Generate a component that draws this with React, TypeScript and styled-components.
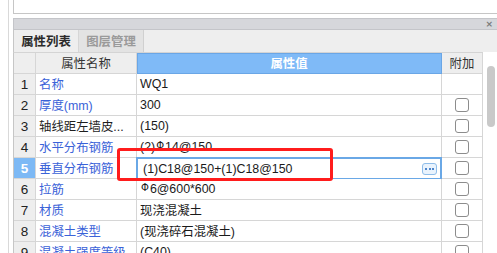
import React from "react";
import styled, { createGlobalStyle } from "styled-components";

const GlobalStyle = createGlobalStyle`
  html, body { margin: 0; padding: 0; background: #ffffff; }
  body {
    font-family: "Liberation Sans", "Noto Sans CJK SC", sans-serif;
    font-size: 12.4px;
    color: #1a1a1a;
    overflow: hidden;
  }
`;

const Page = styled.div`
  position: relative;
  width: 497px;
  height: 253px;
  overflow: hidden;
  padding-left: 8px;
  box-sizing: border-box;
  display: flex;
`;

const Gutter = styled.div`
  flex: 1;
  border-left: 1px solid #d9d9d9;
  padding-left: 4px;
  display: flex;
`;

const Panel = styled.div`
  flex: 1;
  display: flex;
  flex-direction: column;
`;

const TopPane = styled.div`
  height: 13px;
  border-left: 1px solid #c6c6c6;
  border-bottom: 1px solid #c6c6c6;
  background: #ffffff;
  flex: none;
`;

const Spacer = styled.div`
  height: 4px;
  flex: none;
`;

const TitleBar = styled.div`
  height: 10px;
  flex: none;
  background: #d6d7db;
  border: 1px solid #c4c5c9;
  border-right: none;
  display: flex;
  justify-content: flex-end;
  align-items: center;
  padding-right: 4px;
`;

const CloseGlyph = styled.span`
  font-family: "DejaVu Sans", sans-serif;
  font-size: 9px;
  line-height: 10px;
  color: #7a7a7a;
  font-weight: bold;
`;

const TabStrip = styled.div`
  height: 22px;
  flex: none;
  background: #eeeeee;
  border-left: 1px solid #c6c6c6;
  display: flex;
`;

const Tab = styled.div<{ $active?: boolean }>`
  width: 64px;
  box-sizing: border-box;
  display: flex;
  align-items: center;
  justify-content: center;
  font-family: "Noto Sans CJK SC", sans-serif;
  font-size: 12.4px;
  font-weight: ${(p) => (p.$active ? 700 : 700)};
  color: ${(p) => (p.$active ? "#2b2b2b" : "#9a9a9a")};
  background: ${(p) => (p.$active ? "#eeeeee" : "#e3e3e3")};
  border-right: 1px solid ${(p) => (p.$active ? "#d6d6d6" : "#d0d0d0")};
  border-left: ${(p) => (p.$active ? "none" : "none")};
  width: ${(p) => (p.$active ? "65px" : "65px")};
`;

const TableArea = styled.div`
  flex: 1;
  display: flex;
  min-height: 0;
`;

const Grid = styled.div`
  width: 470px;
  flex: none;
  border-left: 1px solid #c6c6c6;
  border-top: 1px solid #d4d4d4;
  box-sizing: border-box;
  display: flex;
  flex-direction: column;
`;

const Row = styled.div`
  display: flex;
  height: 21px;
  flex: none;
`;

const Cell = styled.div<{ $w: number; $bg?: string; $align?: string }>`
  position: relative;
  width: ${(p) => p.$w}px;
  flex: none;
  box-sizing: border-box;
  height: 21px;
  border-right: 1px solid #d6d6d6;
  border-bottom: 1px solid #d6d6d6;
  background: ${(p) => p.$bg || "#ffffff"};
  display: flex;
  align-items: center;
  justify-content: ${(p) => p.$align || "flex-start"};
  white-space: nowrap;
  overflow: visible;
`;

const HeadText = styled.span<{ $light?: boolean }>`
  font-family: "Noto Sans CJK SC", sans-serif;
  font-size: 12.4px;
  color: ${(p) => (p.$light ? "#ffffff" : "#333333")};
  font-weight: ${(p) => (p.$light ? 700 : 400)};
`;

const BlueHead = styled(Cell)`
  background: #7fbaf7;
  border-right: 1px solid #6aa6e6;
  border-bottom: 1px solid #6aa6e6;
  box-shadow: inset 1px 1px 0 #6aa6e6;
`;

const NumText = styled.span<{ $sel?: boolean }>`
  font-family: "Liberation Sans", sans-serif;
  font-size: 13.5px;
  color: ${(p) => (p.$sel ? "#ffffff" : "#222222")};
  font-weight: ${(p) => (p.$sel ? 700 : 400)};
`;

const NameText = styled.span<{ $link?: boolean }>`
  padding-left: 3px;
  color: ${(p) => (p.$link ? "#3a62d8" : "#1e1e1e")};
`;

const ValueText = styled.span`
  padding-left: 3px;
  color: #1a1a1a;
`;

const Rebar = styled.span`
  font-family: "DejaVu Sans", sans-serif;
  font-size: 10px;
  position: relative;
  top: -2px;
  margin: 0 1px;
`;

const EditBox = styled.div`
  position: absolute;
  top: -1px;
  left: -1px;
  right: -1px;
  bottom: -2px;
  border: 2px solid #6aa8e6;
  background: #ffffff;
  display: flex;
  align-items: center;
  padding-left: 5px;
  padding-right: 3px;
  box-sizing: border-box;
`;

const EditText = styled.span`
  flex: 1;
  color: #1a1a1a;
`;

const MoreButton = styled.div`
  width: 15px;
  height: 12px;
  box-sizing: border-box;
  border: 1px solid #8fbde9;
  border-radius: 3px;
  background: #e9f3fd;
  display: flex;
  align-items: center;
  justify-content: center;
  gap: 1.5px;
`;

const Dot = styled.span`
  width: 2px;
  height: 2px;
  background: #4f86cc;
  flex: none;
`;

const CheckBox = styled.div`
  width: 14px;
  height: 14px;
  box-sizing: border-box;
  border: 1px solid #8c8c8c;
  border-radius: 3px;
  background: #ffffff;
`;

const ScrollTrack = styled.div`
  flex: 1;
  background: #ffffff;
  position: relative;
  padding-left: 4px;
  padding-top: 14px;
`;

const Thumb = styled.div`
  width: 8px;
  height: 61px;
  border-radius: 4px;
  background: #c9c9c9;
`;

const Annotation = styled.div`
  position: absolute;
  left: 117px;
  top: 148px;
  width: 216px;
  height: 33px;
  box-sizing: border-box;
  border: 3px solid #ff1c1c;
  border-radius: 3px;
  pointer-events: none;
`;

const W = { num: 22, name: 101, value: 305, extra: 41 };

type RowData = {
  n: number;
  name: string;
  link: boolean;
  value: React.ReactNode;
  check: boolean;
};

const rows: RowData[] = [
  { n: 1, name: "名称", link: true, value: "WQ1", check: false },
  { n: 2, name: "厚度(mm)", link: true, value: "300", check: true },
  { n: 3, name: "轴线距左墙皮...", link: false, value: "(150)", check: true },
  {
    n: 4,
    name: "水平分布钢筋",
    link: true,
    value: (
      <>
        (2)<Rebar>Φ</Rebar>14@150
      </>
    ),
    check: true,
  },
  { n: 5, name: "垂直分布钢筋", link: true, value: "(1)C18@150+(1)C18@150", check: true },
  {
    n: 6,
    name: "拉筋",
    link: true,
    value: (
      <>
        <Rebar>Φ</Rebar>6@600*600
      </>
    ),
    check: true,
  },
  { n: 7, name: "材质", link: true, value: "现浇混凝土", check: true },
  { n: 8, name: "混凝土类型", link: true, value: "(现浇碎石混凝土)", check: true },
  { n: 9, name: "混凝土强度等级", link: true, value: "(C40)", check: true },
];

export default function App() {
  return (
    <>
      <GlobalStyle />
      <Page>
        <Gutter>
          <Panel>
            <TopPane />
            <Spacer />
            <TitleBar>
              <CloseGlyph>×</CloseGlyph>
            </TitleBar>
            <TabStrip>
              <Tab $active>属性列表</Tab>
              <Tab>图层管理</Tab>
            </TabStrip>
            <TableArea>
              <Grid>
                <Row>
                  <Cell $w={W.num} $bg="#eeeeee" />
                  <Cell $w={W.name} $bg="#eeeeee" $align="center">
                    <HeadText>属性名称</HeadText>
                  </Cell>
                  <BlueHead $w={W.value} $align="center">
                    <HeadText $light>属性值</HeadText>
                  </BlueHead>
                  <Cell $w={W.extra} $bg="#eeeeee" $align="center">
                    <HeadText>附加</HeadText>
                  </Cell>
                </Row>
                {rows.map((r) => {
                  const sel = r.n === 5;
                  return (
                    <Row key={r.n}>
                      <Cell $w={W.num} $bg={sel ? "#7db9f5" : "#eeeeee"} $align="center">
                        <NumText $sel={sel}>{r.n}</NumText>
                      </Cell>
                      <Cell $w={W.name}>
                        <NameText $link={r.link}>{r.name}</NameText>
                      </Cell>
                      <Cell $w={W.value}>
                        {sel ? (
                          <EditBox>
                            <EditText>{r.value}</EditText>
                            <MoreButton>
                              <Dot />
                              <Dot />
                              <Dot />
                            </MoreButton>
                          </EditBox>
                        ) : (
                          <ValueText>{r.value}</ValueText>
                        )}
                      </Cell>
                      <Cell $w={W.extra} $align="center">
                        {r.check && <CheckBox />}
                      </Cell>
                    </Row>
                  );
                })}
              </Grid>
              <ScrollTrack>
                <Thumb />
              </ScrollTrack>
            </TableArea>
          </Panel>
        </Gutter>
        <Annotation />
      </Page>
    </>
  );
}
